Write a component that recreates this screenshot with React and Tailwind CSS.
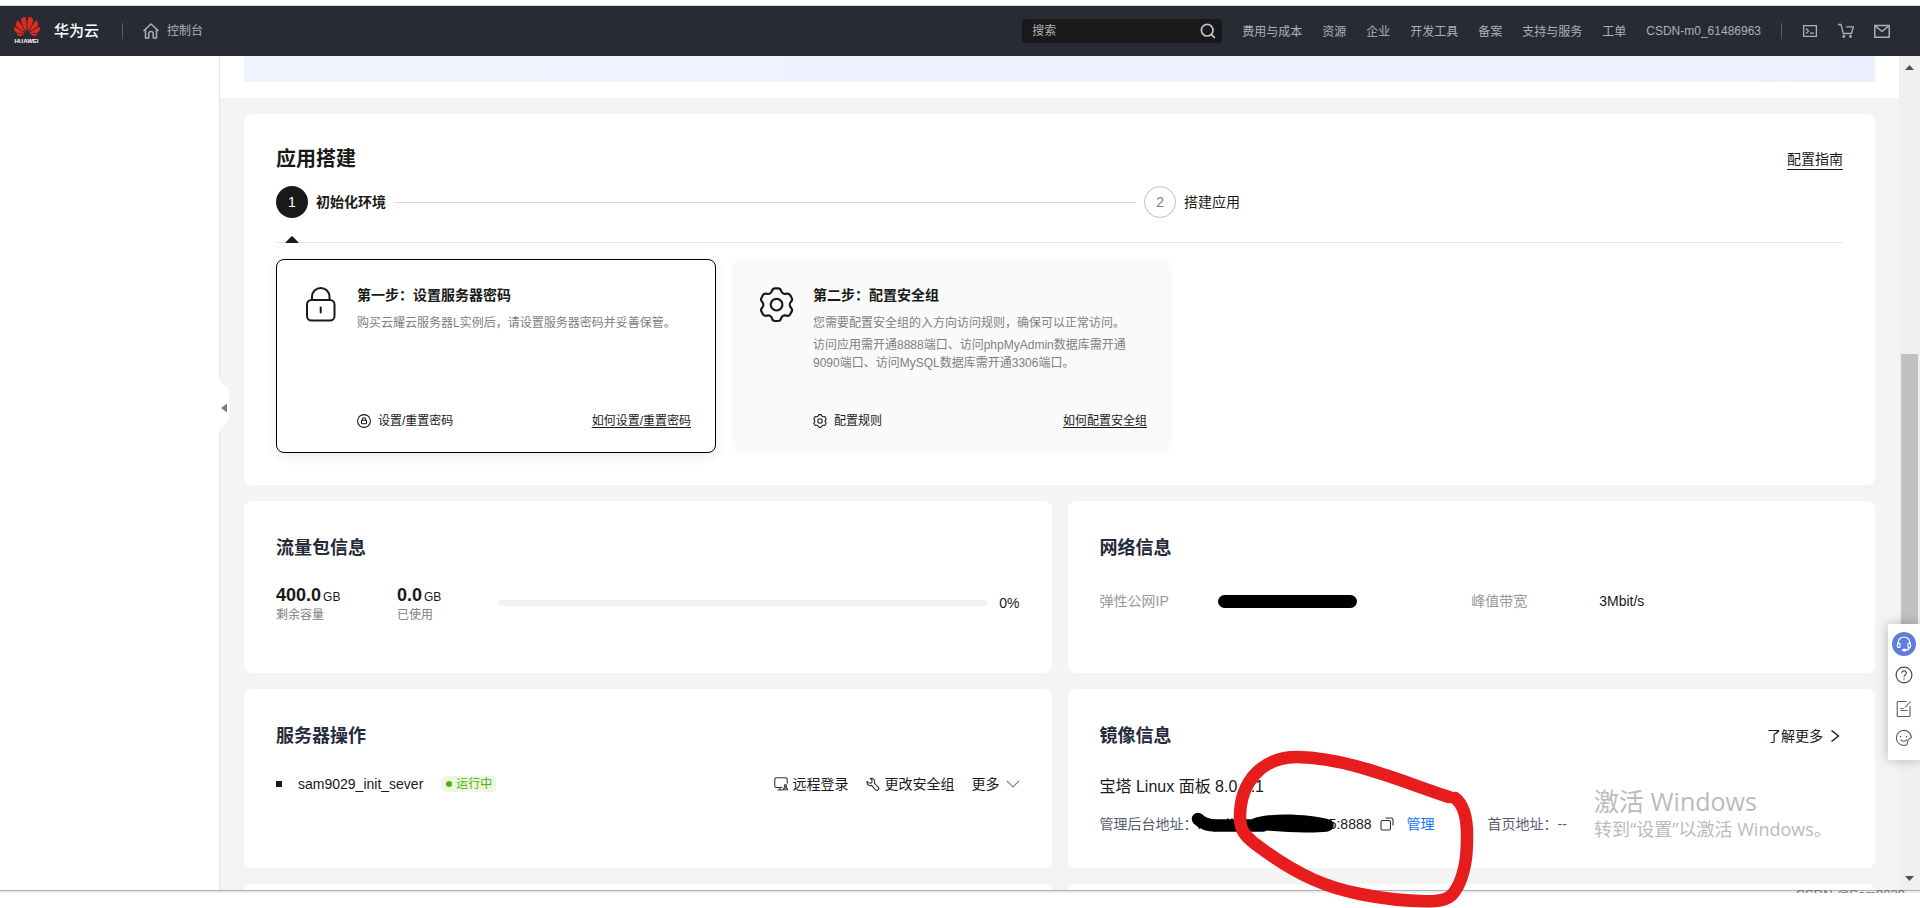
import React, { useState } from "react";
import { SiHuawei } from "react-icons/si";

const navLinks = ["费用与成本", "资源", "企业", "开发工具", "备案", "支持与服务", "工单"];

const gearPath =
  "M9.6 3.6c.2-.8.8-1.3 1.6-1.3h1.6c.8 0 1.4.5 1.6 1.3.3 1.2 1.5 1.9 2.7 1.6.9-.3 1.7 0 2.2.8l.7 1.3c.4.7.3 1.5-.3 2.1-.9.9-.9 2.3 0 3.2.6.6.7 1.4.3 2.1l-.7 1.3c-.5.8-1.3 1.1-2.2.8-1.2-.3-2.4.4-2.7 1.6-.2.8-.8 1.3-1.6 1.3h-1.6c-.8 0-1.4-.5-1.6-1.3-.3-1.2-1.5-1.9-2.7-1.6-.9.3-1.7 0-2.2-.8l-.7-1.3c-.4-.7-.3-1.5.3-2.1.9-.9.9-2.3 0-3.2-.6-.6-.7-1.4-.3-2.1l.7-1.3c.5-.8 1.3-1.1 2.2-.8 1.2.3 2.400-.4 2.700-1.600z";

const HomeIcon = () => (
  <svg width="16" height="16" viewBox="0 0 16 16" fill="none" stroke="#adb0b8" strokeWidth="1.5" strokeLinejoin="round" strokeLinecap="round">
    <path d="M1 7.5 8 1l7 6.5M2.5 6.5V15h3.3v-4.2a2.2 2.2 0 0 1 4.4 0V15h3.3V6.5" />
  </svg>
);

const SearchIcon = () => (
  <svg width="16" height="16" viewBox="0 0 16 16" fill="none" stroke="#c0c3cc" strokeWidth="1.7">
    <circle cx="7.2" cy="7.2" r="5.8" />
    <path d="m11.3 11.3 3.5 3.5" />
  </svg>
);

const TerminalIcon = () => (
  <svg width="16" height="16" viewBox="0 0 16 16" fill="none" stroke="#adb0b8" strokeWidth="1.3">
    <path d="M1.6 2.6h12.8v10.8H1.6zM4 5.5 6.5 8 4 10.5M8 10.2h4" />
  </svg>
);

const CartIcon = () => (
  <svg width="16" height="16" viewBox="0 0 16 16" fill="none" stroke="#adb0b8" strokeWidth="1.3">
    <path d="M0 1.5h3l2.3 9h8.200l1.800-6.700H8" />
    <circle cx="5.8" cy="13.5" r=".8" />
    <circle cx="12.5" cy="13.5" r=".8" />
  </svg>
);

const MailIcon = () => (
  <svg width="16" height="16" viewBox="0 0 16 16" fill="none" stroke="#adb0b8" strokeWidth="1.5">
    <path d="M.8 2.6h14.4v11.6H.8zM1.5 3 8 8.5 14.5 3" />
  </svg>
);

const LockIcon = () => (
  <svg className="shrink-0" width="32" height="38" viewBox="0 0 32 38" fill="none" stroke="#191919" strokeWidth="2" strokeLinecap="round">
    <rect x="2" y="15" width="27.5" height="20.5" rx="4.5" />
    <path d="M7 15v-3.5a8.700 8.500 0 0 1 17.500 0V15M15.700 22.500v5" />
  </svg>
);

const GearIcon = () => (
  <svg className="shrink-0 overflow-visible" width="32" height="38" viewBox="0 0 32 38" fill="none" stroke="#191919">
    <g transform="translate(-7 -1) scale(1.88)" strokeWidth="1.15" strokeLinejoin="round">
      <path d={gearPath} />
      <circle cx="12" cy="11" r="3.1" />
    </g>
  </svg>
);

const SmallLockIcon = () => (
  <svg width="14" height="14" viewBox="0 0 14 14" fill="none" stroke="#191919" strokeWidth="1.1">
    <circle cx="7" cy="7" r="6.4" />
    <rect x="4.5" y="6.2" width="5" height="3.6" rx=".8" />
    <path d="M5.3 6.2V5.5a1.7 1.7 0 0 1 3.4 0v.7" />
  </svg>
);

const SmallGearIcon = () => (
  <svg width="14" height="14" viewBox="2.5 1.5 19 19" fill="none" stroke="#191919" strokeWidth="1.5">
    <path d={gearPath} />
    <circle cx="12" cy="11" r="3" />
  </svg>
);

const RemoteIcon = () => (
  <svg width="14" height="14" viewBox="0 0 14 14" fill="none" stroke="#333" strokeWidth="1.1">
    <path d="M8.5 10.5H2.3A1.5 1.5 0 0 1 .8 9V2.3A1.5 1.5 0 0 1 2.3.8h9.4a1.5 1.5 0 0 1 1.5 1.5v4.2M3.5 13H9M6 10.5V13" />
    <circle cx="11.5" cy="8.7" r="1.1" />
    <path d="M9.5 12.8c0-1.4.8-2.2 2-2.2s2 .8 2 2.2z" />
  </svg>
);

const WrenchIcon = () => (
  <svg width="14" height="14" viewBox="0 0 14 14" fill="none" stroke="#333" strokeWidth="1.1" strokeLinejoin="round">
    <path d="M4.3 1.3 6 3.2v2L4.6 6.3 2.5 5.8 1 4.3c-.3 1.9.5 3.6 2.2 4.2.9.3 1.7.1 2.5-.1l3.8 4.4c.8.7 1.9.8 2.7 0s.8-1.9 0-2.7L8.4 6.3c.5-1.2.4-2.7-.6-3.9-.9-1-2.200-1.400-3.500-1.100z" />
  </svg>
);

const CopyIcon = () => (
  <svg width="14" height="14" viewBox="0 0 14 14" fill="none" stroke="#333" strokeWidth="1.1">
    <rect x="1" y="3.5" width="9.5" height="9.5" rx="1.5" />
    <path d="M5.5 1H11a2 2 0 0 1 2 2v5.5" />
  </svg>
);

const Header = () => {
  const [keyword, setKeyword] = useState("");

  return (
    <header className="flex h-[50px] shrink-0 items-center bg-[#282b33] pl-[13px] pr-[30px] text-xs text-[#adb0b8]">
      <a href="#" className="flex items-center gap-3.5">
        <span className="flex w-[27px] flex-col items-center gap-0.5">
          <SiHuawei className="h-[19px] w-[26px]" viewBox="0 3.5 24 17" color="#e02a20" />
          <span className="text-[6px] font-bold leading-[7px] text-white">HUAWEI</span>
        </span>
        <span className="text-[15px] font-medium leading-5 text-white">华为云</span>
      </a>
      <span className="ml-[23px] h-4 w-px bg-[#575d6c]"></span>
      <a href="#" className="ml-5 flex items-center gap-2">
        <HomeIcon />
        <span className="leading-4">控制台</span>
      </a>

      <div className="ml-auto flex items-center gap-5">
        <div className="flex h-6 w-[200px] items-center rounded-sm bg-[#191919] pl-2.5 pr-1.5">
          <input
            type="text"
            aria-label="搜索"
            placeholder="搜索"
            className="w-full min-w-0 flex-1 bg-transparent placeholder:text-[#adb0b8] focus:outline-none"
            value={keyword}
            onChange={(e) => setKeyword(e.target.value)}
          />
          <button type="button" aria-label="搜索">
            <SearchIcon />
          </button>
        </div>
        {navLinks.map((item) => (
          <a key={item} href="#" className="whitespace-nowrap pt-0.5 leading-4">{item}</a>
        ))}
        <a href="#" className="whitespace-nowrap leading-4">CSDN-m0_61486963</a>
        <span className="h-4 w-px bg-[#575d6c]"></span>
        <button type="button" aria-label="CloudShell"><TerminalIcon /></button>
        <button type="button" aria-label="购物车"><CartIcon /></button>
        <button type="button" aria-label="消息"><MailIcon /></button>
      </div>
    </header>
  );
};

const StepCard = ({ icon, title, children, actionIcon, action, help, active }) => (
  <div
    className={
      active
        ? "flex h-[194px] w-[440px] gap-5 rounded-lg border border-black bg-white pb-[22px] pl-7 pr-6 pt-[25px] shadow-[0_4px_12px_rgba(0,0,0,0.08)]"
        : "flex h-[194px] w-[440px] gap-5 rounded-lg border border-[#fafafa] bg-[#fafafa] pb-[22px] pl-7 pr-6 pt-[25px]"
    }
  >
    {icon}
    <div className="flex min-w-0 flex-1 flex-col">
      <h3 className="text-sm font-bold leading-5">{title}</h3>
      <div className="mt-[9px] flex flex-col gap-1 text-xs leading-[18px] text-[#808080]">{children}</div>
      <div className="mt-auto flex items-center justify-between text-xs leading-[18px]">
        <button type="button" className="flex items-center gap-[7px]">
          {actionIcon}
          {action}
        </button>
        <a href="#" className="underline underline-offset-2">{help}</a>
      </div>
    </div>
  </div>
);

const BuildPanel = () => (
  <section className="rounded-lg bg-white p-8">
    <div className="flex items-center justify-between">
      <h2 className="text-xl font-bold leading-[26px]">应用搭建</h2>
      <a href="#" className="border-b border-[#191919] text-sm leading-5">配置指南</a>
    </div>

    <div className="mt-3.5 flex items-center">
      <div className="flex w-[55.4%] items-center gap-2 pr-2">
        <span className="flex size-8 items-center justify-center rounded-full bg-[#191919] text-sm text-white">1</span>
        <span className="text-sm font-bold leading-5">初始化环境</span>
        <span className="h-px flex-1 bg-[#d9d9d9]"></span>
      </div>
      <div className="flex items-center gap-2">
        <span className="flex size-8 items-center justify-center rounded-full border border-[#c2c2c2] text-sm text-[#808080]">2</span>
        <span className="text-sm leading-5">搭建应用</span>
      </div>
    </div>

    <div className="relative mt-6 h-px bg-[#e8e8e8]">
      <svg className="absolute bottom-0 left-[9px]" width="14" height="7" viewBox="0 0 14 7">
        <path d="M0 7 6 .7q1-.9 2 0L14 7z" fill="#191919" />
      </svg>
    </div>

    <div className="mt-4 flex gap-4">
      <StepCard
        active
        icon={<LockIcon />}
        title="第一步：设置服务器密码"
        actionIcon={<SmallLockIcon />}
        action="设置/重置密码"
        help="如何设置/重置密码"
      >
        <p>购买云耀云服务器L实例后，请设置服务器密码并妥善保管。</p>
      </StepCard>
      <StepCard
        icon={<GearIcon />}
        title="第二步：配置安全组"
        actionIcon={<SmallGearIcon />}
        action="配置规则"
        help="如何配置安全组"
      >
        <p>您需要配置安全组的入方向访问规则，确保可以正常访问。</p>
        <p>访问应用需开通8888端口、访问phpMyAdmin数据库需开通9090端口、访问MySQL数据库需开通3306端口。</p>
      </StepCard>
    </div>
  </section>
);

const TrafficPanel = () => (
  <section className="min-h-[172px] rounded-lg bg-white px-8 pt-8">
    <h2 className="text-lg font-bold leading-[30px] text-[#252b3a]">流量包信息</h2>
    <div className="mt-5 flex items-center">
      <div className="w-[121px]">
        <p className="flex h-6 items-baseline gap-0.5 text-xs leading-6"><b className="text-lg leading-6">400.0</b>GB</p>
        <p className="text-xs leading-4 text-[#808080]">剩余容量</p>
      </div>
      <div className="w-[101px]">
        <p className="flex h-6 items-baseline gap-0.5 text-xs leading-6"><b className="text-lg leading-6">0.0</b>GB</p>
        <p className="text-xs leading-4 text-[#808080]">已使用</p>
      </div>
      <div role="progressbar" aria-valuenow={0} className="h-1.5 flex-1 rounded-full bg-[#f2f2f2]"></div>
      <span className="ml-3 text-sm leading-5">0%</span>
    </div>
  </section>
);

const NetworkPanel = () => (
  <section className="min-h-[172px] rounded-lg bg-white px-8 pt-8">
    <h2 className="text-lg font-bold leading-[30px] text-[#252b3a]">网络信息</h2>
    <dl className="mt-7 grid grid-cols-2 text-sm leading-5">
      <div className="flex items-center">
        <dt className="w-[118px] text-[#999]">弹性公网IP</dt>
        <dd className="h-[13px] w-[139px] rounded-full bg-black"></dd>
      </div>
      <div className="flex items-center">
        <dt className="w-32 text-[#999]">峰值带宽</dt>
        <dd>3Mbit/s</dd>
      </div>
    </dl>
  </section>
);

const ServerPanel = () => (
  <section className="min-h-[179px] rounded-lg bg-white px-8 pt-8">
    <h2 className="text-lg font-bold leading-[30px] text-[#252b3a]">服务器操作</h2>
    <div className="mt-[22px] flex h-[22px] items-center text-sm leading-5">
      <span className="size-1.5 bg-[#191919]"></span>
      <span className="ml-4">sam9029_init_sever</span>
      <span className="ml-[18px] flex h-4 items-center gap-1 rounded-sm bg-[#eef6e6] pl-[5px] pr-1 text-xs leading-4 text-[#50b300]">
        <span className="size-1.5 rounded-full bg-[#50b300]"></span>
        运行中
      </span>
      <div className="ml-auto flex items-center gap-[17px]">
        <button type="button" className="flex items-center gap-[5px]"><RemoteIcon />远程登录</button>
        <button type="button" className="flex items-center gap-[5px]"><WrenchIcon />更改安全组</button>
        <button type="button" className="flex items-center gap-1.5">
          更多
          <svg width="14" height="8" viewBox="0 0 14 8" fill="none" stroke="#808080" strokeWidth="1.1">
            <path d="m1 1 6 6 6-6" />
          </svg>
        </button>
      </div>
    </div>
  </section>
);

const ImagePanel = () => (
  <section className="min-h-[179px] rounded-lg bg-white px-8 pt-8">
    <div className="flex items-center justify-between">
      <h2 className="text-lg font-bold leading-[30px] text-[#252b3a]">镜像信息</h2>
      <a href="#" className="flex items-center gap-1.5 text-sm leading-5">
        了解更多
        <svg width="14" height="14" viewBox="0 0 14 14" fill="none" stroke="#191919" strokeWidth="1.4">
          <path d="m2.5 1.5 7 5.500-7 5.500" />
        </svg>
      </a>
    </div>
    <p className="mt-6 text-base leading-6">宝塔 Linux 面板 8.0.1.1</p>
    <div className="mt-[15px] flex text-sm leading-5">
      <div className="flex w-[388px] items-center">
        <span className="text-[#575d6c]">管理后台地址：</span>
        <span className="relative flex w-[174px] justify-between">
          <span>http://</span>
          <span>5:8888</span>
          <svg className="absolute -left-2 top-[-3px]" width="148" height="24" viewBox="0 0 148 24">
            <path d="M8 8c5 5 10 6.500 18 6.500h47" fill="none" stroke="#000" strokeWidth="12.5" strokeLinecap="round" />
            <path d="M62 8C78 1 122 3 141 9q4 3 2 8-2 4-10 4-30 2-70-3z" />
          </svg>
        </span>
        <button type="button" aria-label="复制" className="ml-2"><CopyIcon /></button>
        <a href="#" className="ml-[13px] text-[#1476ff]">管理</a>
      </div>
      <div className="text-[#575d6c]">首页地址：--</div>
    </div>
  </section>
);

const Scrollbar = () => (
  <div aria-hidden="true" className="flex w-[21px] shrink-0 flex-col items-center bg-[#f0f0f0] py-[9px]">
    <svg width="9" height="5" viewBox="0 0 9 5"><path d="M0 5 4.5 0 9 5z" fill="#505050" /></svg>
    <span className="mt-[284px] w-[17px] flex-1 bg-[#c1c1c1]"></span>
    <svg className="mt-[120px]" width="9" height="5" viewBox="0 0 9 5"><path d="M0 0h9L4.5 5z" fill="#505050" /></svg>
  </div>
);

const ToolDock = () => (
  <div className="absolute right-0 top-[624px] flex h-[136px] w-8 flex-col items-center bg-white pt-2 shadow-[0_0_12px_rgba(0,0,0,0.25)]">
    <button type="button" aria-label="在线客服" className="flex size-6 items-center justify-center rounded-full bg-[#5e7ce0]">
      <svg width="16" height="16" viewBox="0 0 16 16" fill="none" stroke="#fff" strokeWidth="1.2">
        <path d="M2 8V7a6 6 0 0 1 12 0v1M13.5 11.5c-.5 1.800-2 2.500-4 2.500" />
        <rect x="1.5" y="7" width="2.5" height="4.5" rx=".8" />
        <rect x="12" y="7" width="2.5" height="4.5" rx=".8" />
        <ellipse cx="8.3" cy="14" rx="1.7" ry="1" fill="#fff" />
      </svg>
    </button>
    <button type="button" aria-label="帮助" className="mt-2.5">
      <svg width="18" height="18" viewBox="0 0 18 18" fill="none" stroke="#464c59" strokeWidth="1.2">
        <circle cx="9" cy="9" r="7.9" />
        <path d="M6.7 7.2a2.3 2.3 0 1 1 3.3 2c-.7.4-1 .8-1 1.6M9 12.2v1.300" />
      </svg>
    </button>
    <button type="button" aria-label="反馈" className="mt-4">
      <svg width="18" height="18" viewBox="0 0 18 18" fill="none" stroke="#575d6c" strokeWidth="1.1">
        <path d="M11.5 1.5H3.2a1 1 0 0 0-1 1v13a1 1 0 0 0 1 1H14a1 1 0 0 0 1-1V6M15.5 1.5 10 7.500M5.500 8.500h3M5.500 10.500h7" />
      </svg>
    </button>
    <button type="button" aria-label="满意度" className="mt-[11px]">
      <svg width="18" height="18" viewBox="0 0 18 18" fill="none" stroke="#575d6c" strokeWidth="1.1">
        <path d="M12 15.7A7.5 7.5 0 1 1 16.300 8M12 15.700 13 11l3.800-3M5.500 10.500c1.500 2.300 5 2.300 6.500 0" />
        <path d="M5.5 7v1.2M11.5 7v1.2" strokeWidth="1.5" />
      </svg>
    </button>
  </div>
);

const App = () => {
  return (
    <div className="relative flex h-screen flex-col overflow-hidden bg-white font-['Liberation_Sans','Noto_Sans_CJK_SC',sans-serif] text-[#191919]">
      <div className="h-1.5 shrink-0 border-b border-[#d3dcdc] bg-white"></div>
      <Header />

      <div className="flex min-h-0 flex-1">
        <aside className="relative w-[220px] shrink-0 border-r border-[#e6e6e6] bg-white">
          <button type="button" aria-label="收起" className="absolute -right-[11px] top-[320px]">
            <svg width="11" height="58" viewBox="0 0 11 58">
              <path d="M0 0c1 5 2 7 5 9s5 4 5 8v24c0 4-2 6-5 8s-4 4-5 9z" fill="#fff" />
              <path d="M8 27.5v9L2 32z" fill="#808080" />
            </svg>
          </button>
        </aside>

        <main className="min-w-0 flex-1 overflow-hidden bg-[#f4f4f4]">
          <div className="bg-white px-6 pb-4">
            <div className="h-[26px] bg-linear-to-r from-[#f0f4ff] to-[#ebefff]"></div>
          </div>
          <div className="flex flex-col gap-4 px-6 pt-4">
            <BuildPanel />
            <div className="grid grid-cols-2 gap-4">
              <TrafficPanel />
              <NetworkPanel />
              <ServerPanel />
              <ImagePanel />
              <section className="h-40 rounded-lg bg-white"></section>
              <section className="h-40 rounded-lg bg-white"></section>
            </div>
          </div>
        </main>

        <Scrollbar />
      </div>

      <footer className="h-[18px] shrink-0 border-t border-[#a9adb1] bg-white">
        <div className="h-0.5 bg-[#e9eef3]"></div>
      </footer>

      <ToolDock />

      {/* system activation notice */}
      <div className="pointer-events-none absolute bottom-[67px] right-[90px] w-[236px] whitespace-nowrap font-['Open_Sans','Noto_Sans_CJK_SC',sans-serif] text-[#bbb]">
        <p className="text-[25px] leading-8">激活 Windows</p>
        <p className="text-lg leading-6">转到“设置”以激活 Windows。</p>
      </div>

      {/* blog watermark, cut off by the window edge */}
      <div className="pointer-events-none absolute bottom-[15px] right-[15px] h-[6px] overflow-hidden text-[13px] leading-4 text-[#707070]">
        CSDN @Sam9029
      </div>

      {/* hand-drawn marker */}
      <svg className="pointer-events-none absolute bottom-0 right-[440px]" width="250" height="168" viewBox="1230 740 250 168" fill="none" stroke="#e71d1d" strokeWidth="12.5" strokeLinecap="round" strokeLinejoin="round">
        <path d="M1449 797C1400 781 1350 758 1297 757C1262 757 1240 782 1240 817C1240 832 1247 837 1254 843C1300 878 1330 888 1360 894C1390 900 1410 902 1435 901C1450 900 1454 894 1459 884C1467 866 1467 848 1467 835C1467 818 1463 804 1455 798" />
      </svg>
    </div>
  );
};

export default App;
